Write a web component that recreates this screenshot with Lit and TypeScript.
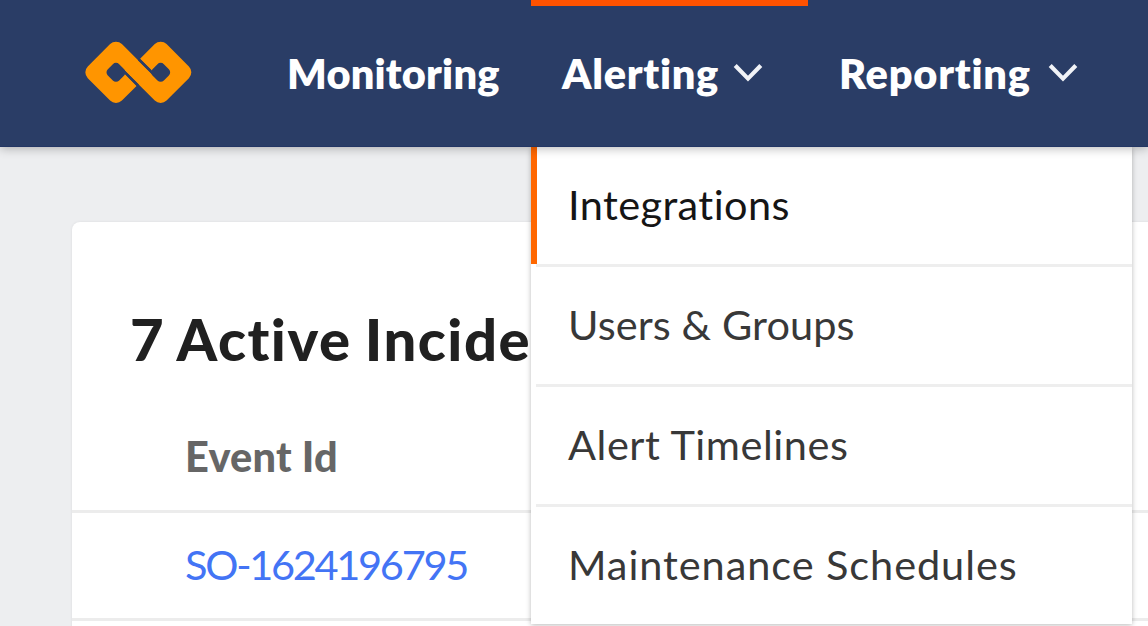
import { LitElement, html, css } from "lit";
import { customElement } from "lit/decorators.js";

const chevron = html`<svg class="chevron" width="30" height="20" viewBox="0 0 30 20">
  <path d="M2.2 2.5 L15 15.6 L27.8 2.5" fill="none" stroke="#f1f3f7" stroke-width="4.2" />
</svg>`;

@customElement("app-root")
export class AppRoot extends LitElement {
  static styles = css`
    :host {
      display: block;
      position: relative;
      width: 1148px;
      height: 626px;
      overflow: hidden;
      background: #edeef0;
      font-family: Lato, "Open Sans", sans-serif;
      font-size: 41.5px;
      font-variant-ligatures: none;
      white-space: nowrap;
    }
    .header {
      position: relative;
      z-index: 3;
      box-sizing: border-box;
      height: 147px;
      display: flex;
      background: #2a3d66;
      border-bottom: 1px solid #233664;
      color: #fff;
      font-weight: 800;
      box-shadow: 0 1px 10px rgba(0, 0, 0, 0.3);
    }
    .logo {
      flex: none;
      margin: 30px 46px 0 70px;
    }
    .item {
      box-sizing: border-box;
      flex: none;
      display: flex;
      height: 146px;
      line-height: 50px;
      padding: 42px 0 0 31px;
      border-top: 6px solid transparent;
    }
    .monitoring { width: 275px; }
    .alerting { width: 277px; border-top-color: #ff5200; }
    .reporting { width: 310px; }
    .label { flex: none; }
    .monitoring .label { letter-spacing: 0.2px; }
    .alerting .label { width: 171px; letter-spacing: 0.7px; }
    .reporting .label { width: 209px; letter-spacing: 0.75px; }
    .chevron { flex: none; margin-top: 15px; }
    .card {
      box-sizing: border-box;
      margin: 75px 0 0 72px;
      height: 420px;
      width: 1200px;
      background: #fff;
      border-radius: 8px;
      box-shadow: 0 0 3px rgba(0, 0, 0, 0.08);
    }
    .title {
      margin: 0;
      padding: 82px 0 0 58px;
      height: 206px;
      box-sizing: border-box;
      line-height: 70px;
      font-size: 58px;
      font-weight: 900;
      color: #202020;
      letter-spacing: 1.5px;
      word-spacing: -2px;
    }
    .row {
      box-sizing: border-box;
      height: 108px;
      padding: 26px 0 0 113px;
      line-height: 50px;
      border-bottom: 3px solid #ececec;
    }
    .head {
      height: 85px;
      padding-top: 3px;
      color: #666;
      font-weight: 900;
      letter-spacing: 0.2px;
    }
    .link { color: #4374f5; letter-spacing: -2.3px; }
    .menu {
      position: absolute;
      z-index: 2;
      left: 531px;
      top: 147px;
      width: 601px;
      height: 477px;
      background: #fff;
      box-shadow: 0 1px 5px rgba(0, 0, 0, 0.28);
    }
    .entry {
      box-sizing: border-box;
      position: relative;
      height: 120px;
      margin-left: 5px;
      padding: 32px 0 0 32px;
      line-height: 50px;
      color: #383838;
      border-bottom: 3px solid #eee;
    }
    .entry:first-child {
      color: #151515;
    }
    .entry:first-child::before {
      content: "";
      position: absolute;
      left: -5px;
      top: 0;
      width: 6px;
      height: 117px;
      background: #ff6700;
    }
    .entry:last-child { border-bottom: 0; height: 117px; }
    .e1 { letter-spacing: 0.4px; }
    .e2 { letter-spacing: 0.1px; }
    .e3 { letter-spacing: 0.55px; }
    .e4 { letter-spacing: 0.92px; }
  `;

  render() {
    return html`
      <header class="header">
        <svg class="logo" width="140" height="85" viewBox="0 0 420 255">
          <path
            d="M182 150 L138 194 L71 127 L138 60 L272 194 L339 127 L272 60 L228 104"
            fill="none" stroke="#ff9500" stroke-width="50" stroke-linejoin="round" />
          <path d="M100 127 L138 89 L165 116 L165 134 L138 165Z M310 127 L272 165 L245 138 L245 120 L272 89Z" fill="#ff9500" />
          <path
            d="M123 127 L138 112 L153 127 L138 142Z M257 127 L272 112 L287 127 L272 142Z"
            fill="#2a3d66" stroke="#2a3d66" stroke-width="27" stroke-linejoin="round" />
          <path d="M158 120 L204 166 M252 134 L206 88" stroke="#2a3d66" stroke-width="7" />
        </svg>
        <div class="item monitoring"><span class="label">Monitoring</span></div>
        <div class="item alerting"><span class="label">Alerting</span>${chevron}</div>
        <div class="item reporting"><span class="label">Reporting</span>${chevron}</div>
      </header>
      <main class="card">
        <h1 class="title">7 Active Incide</h1>
        <div class="row head"><span>Event Id</span></div>
        <div class="row"><span class="link">SO-1624196795</span></div>
      </main>
      <nav class="menu">
        <div class="entry e1">Integrations</div>
        <div class="entry e2">Users &amp; Groups</div>
        <div class="entry e3">Alert Timelines</div>
        <div class="entry e4">Maintenance Schedules</div>
      </nav>
    `;
  }
}
